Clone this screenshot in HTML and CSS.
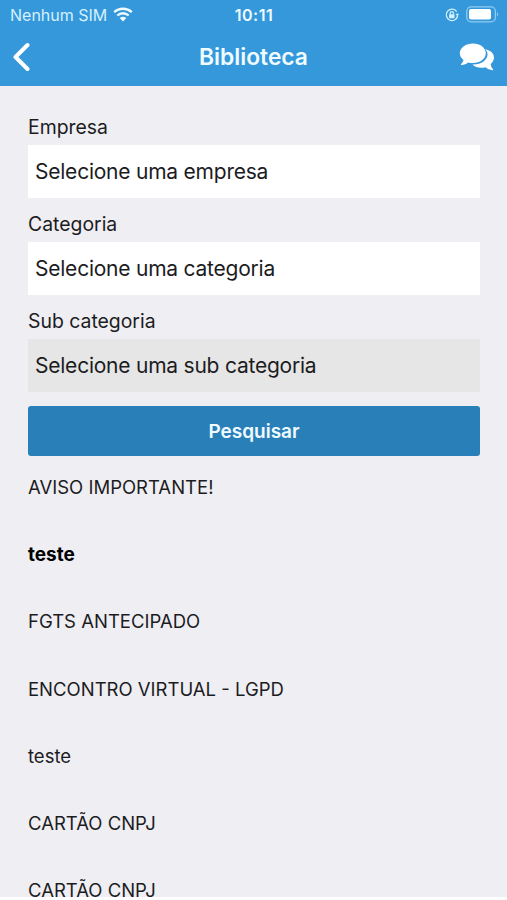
FILE: index.html
```html
<!DOCTYPE html>
<html lang="pt-BR">
<head>
    <meta charset="UTF-8">
    <meta name="viewport" content="width=device-width, initial-scale=1.0">
    <title>Biblioteca</title>
    <link rel="stylesheet" href="styles.css">
</head>
<body>

    <div class="app">
        <header class="header">
            <!-- Status bar -->
            <div class="status-bar">
                <div class="carrier">
                    <span class="carrier-name">Nenhum SIM</span>
                    <svg class="wifi" viewBox="0 0 20 15" width="20" height="15">
                        <path d="M1.2 5.2C6.2 .6 13.8 .6 18.8 5.2" />
                        <path d="M4.3 8.5C7.6 5.5 12.4 5.5 15.7 8.5" />
                        <path class="dot" d="M6.7 11C8.6 9.2 11.4 9.2 13.3 11L10 14.4Z" />
                    </svg>
                </div>
                <span class="clock">10:11</span>
                <div class="indicators">
                    <svg class="rotation" viewBox="0 0 14 14" width="14" height="14">
                        <path d="M11.7 3.6A5.7 5.7 0 1 0 12.6 8" />
                        <path class="fill" d="M10.5 5.8H14L12.4 8.5Z" />
                        <rect class="fill" x="4.1" y="6.2" width="5.4" height="4" rx=".6" />
                        <path class="shackle" d="M5.2 6.5V5.2a1.6 1.6 0 0 1 3.2 0V6.5" />
                    </svg>
                    <svg class="battery" viewBox="0 0 33 17" width="33" height="17">
                        <rect class="case" x=".8" y=".8" width="28.6" height="15" rx="4.4" />
                        <rect class="level" x="3" y="3" width="22" height="10.6" rx="2" />
                        <path class="tip" d="M31 6C32.6 6.8 32.6 9.8 31 10.6Z" />
                    </svg>
                </div>
            </div>

            <!-- Title bar -->
            <div class="nav-bar">
                <button class="nav-button" type="button" aria-label="Voltar">
                    <svg class="back" viewBox="0 0 18 30" width="18" height="30">
                        <path d="M15.5 3L3.5 15L15.5 27" />
                    </svg>
                </button>
                <h1>Biblioteca</h1>
                <button class="nav-button" type="button" aria-label="Mensagens">
                    <svg class="chat" viewBox="0 0 36 28" width="36" height="28">
                        <path d="M26 6.2C31.8 7.4 35 10.5 35 14.6C35 17.2 33.8 19.4 31.8 21C31.8 23.2 32.8 24.8 34 26.2C34.4 26.7 34 27.3 33.4 27.2C30.6 26.9 28.4 26 26.8 24.3C21.5 25.6 16.2 24.4 13.4 21.5C22 21.8 29 17.2 28.5 10.8C28.4 9 27.5 7.5 26 6.2Z" />
                        <path d="M14 .5C21 .5 26.8 4.7 26.8 10.3C26.8 15.9 21 20.1 14 20.1C12.3 20.1 10.7 19.9 9.2 19.4C7.4 20.8 5.3 21.7 2.6 22C2 22.1 1.7 21.5 2.1 21C3.3 19.8 4.3 18.4 4.5 17C2.3 15.3 .8 13 .8 10.3C.8 4.7 7 .5 14 .5Z" />
                    </svg>
                </button>
            </div>
        </header>

        <main class="content">
            <!-- Search form -->
            <form class="search-form">
                <div class="field">
                    <label>Empresa</label>
                    <div class="select">Selecione uma empresa</div>
                </div>
                <div class="field">
                    <label>Categoria</label>
                    <div class="select">Selecione uma categoria</div>
                </div>
                <div class="field">
                    <label>Sub categoria</label>
                    <div class="select disabled">Selecione uma sub categoria</div>
                </div>
                <button class="search-button" type="button">Pesquisar</button>
            </form>

            <!-- Results -->
            <ul class="results">
                <li>AVISO IMPORTANTE!</li>
                <li class="unread">teste</li>
                <li>FGTS ANTECIPADO</li>
                <li>ENCONTRO VIRTUAL - LGPD</li>
                <li>teste</li>
                <li>CARTÃO CNPJ</li>
                <li>CARTÃO CNPJ</li>
            </ul>
        </main>
    </div>

</body>
</html>
```
FILE: styles.css
```css
* {
    box-sizing: border-box;
}
body {
    font-family: 'Inter', 'Liberation Sans', sans-serif;
    background: #ffffff;
    color: #1c1c1f;
    margin: 0;
    height: 900px;
    overflow: hidden;
}
.app {
    background: #efeef3;
    height: 897px;
    overflow: hidden;
}
.header {
    background: #3498db;
    color: #f0fbff;
    height: 86px;
}
.status-bar {
    display: grid;
    grid-template-columns: 1fr auto 1fr;
    align-items: center;
    height: 29px;
    padding: 0 8px 0 9px;
}
.carrier {
    display: flex;
    align-items: center;
    gap: 6px;
    padding-left: 1px;
    font-size: 16px;
    color: #d5f1fd;
}
.wifi path {
    fill: none;
    stroke: #f0fbff;
    stroke-width: 2.3;
}
.wifi .dot {
    fill: #f0fbff;
    stroke: none;
}
.clock {
    font-size: 16px;
    font-weight: 600;
    letter-spacing: 0.5px;
}
.indicators {
    display: flex;
    justify-content: flex-end;
    align-items: center;
    gap: 7px;
}
.rotation path {
    fill: none;
    stroke: #d5f1fd;
    stroke-width: 1.3;
}
.rotation .fill {
    fill: #d5f1fd;
    stroke: none;
}
.battery .case {
    fill: none;
    stroke: #8fcbf2;
    stroke-width: 1.3;
}
.battery .level {
    fill: #ffffff;
}
.battery .tip {
    fill: #8fcbf2;
}
.nav-bar {
    display: flex;
    justify-content: space-between;
    align-items: center;
    height: 56px;
    padding: 0 12px;
}
.nav-button {
    display: flex;
    width: 36px;
    padding: 0;
    border: none;
    background: none;
}
.back path {
    fill: none;
    stroke: #ffffff;
    stroke-width: 4;
    stroke-linecap: round;
    stroke-linejoin: round;
}
.chat {
    fill: #ffffff;
}
h1 {
    margin: 0;
    font-size: 22.8px;
    font-weight: 600;
    line-height: 28px;
}
.content {
    padding: 28px 27px 0 28px;
}
.field {
    margin-bottom: 13.7px;
}
label {
    display: block;
    height: 30.5px;
    font-size: 19.4px;
    line-height: 26px;
}
.select {
    height: 53px;
    padding-left: 7px;
    background: #ffffff;
    font-size: 21px;
    line-height: 53.6px;
    letter-spacing: -0.23px;
}
.select.disabled {
    background: #e6e6e6;
}
.search-button {
    display: block;
    width: 100%;
    height: 50px;
    padding: 1px 0 0;
    border: none;
    border-radius: 3px;
    background: #2980b9;
    color: #f0fbff;
    font-family: inherit;
    font-size: 19px;
    font-weight: 600;
}
.results {
    list-style: none;
    margin: 0;
    padding: 19.5px 0 0;
}
.results li {
    height: 67.2px;
    font-size: 18.5px;
    line-height: 24px;
}
.results .unread {
    color: #000000;
    font-size: 19px;
    font-weight: 700;
    line-height: 26px;
}
```
